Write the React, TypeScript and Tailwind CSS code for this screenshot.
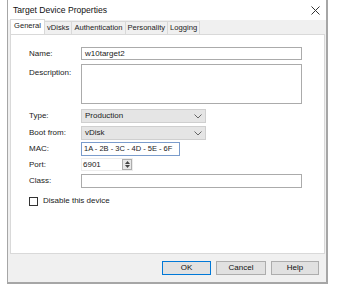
const font = { fontFamily: '"Liberation Sans", Arial, sans-serif' };

function Chevron() {
  return (
    <svg width="8" height="5" viewBox="0 0 8 5" className="text-[#666]">
      <path d="M0.5 0.5l3.5 3.5L7.5 0.5" fill="none" stroke="currentColor" strokeWidth="1" />
    </svg>
  );
}

function Label({ children }: { children: React.ReactNode }) {
  return <div className="w-[52px] shrink-0 text-[8px] text-[#222]">{children}</div>;
}

export default function App() {
  const tabs = ['General', 'vDisks', 'Authentication', 'Personality', 'Logging'];

  return (
    <div className="w-[340px] h-[300px] bg-white" style={font}>
      <div className="ml-[7px] w-[321px] h-[284px] border-l border-r-2 border-b-2 border-[#a6a6a6] flex flex-col bg-white">
        {/* title bar */}
        <div className="h-[20px] flex items-center justify-between pl-[5px] pr-[6px]">
          <span className="text-[8.6px] text-[#111]">Target Device Properties</span>
          <svg width="9" height="9" viewBox="0 0 9 9">
            <path d="M0.5 0.5l8 8M8.5 0.5l-8 8" stroke="#333" strokeWidth="1" />
          </svg>
        </div>

        {/* tabs */}
        <div className="bg-[#f0f0f0] pl-[2px] pr-[1px] flex flex-col flex-1">
          <div className="flex items-end h-[14px] pl-[1px]">
            {tabs.map((t, i) => (
              <div
                key={t}
                className={`text-[7.6px] border border-b-0 border-[#d9d9d9] leading-[12px] -ml-px text-[#222] ${
                  i === 0 ? 'bg-white h-[15px] relative z-10 px-[3px]' : 'bg-[#f0f0f0] h-[13px] px-[2px]'
                }`}
              >
                {t}
              </div>
            ))}
          </div>

          {/* panel */}
          <div className="h-[220px] bg-white border border-[#d9d9d9] pl-[18px] pt-[12px] flex flex-col text-[8px] text-[#222]">
            <div className="flex items-center h-[13px]">
              <Label>Name:</Label>
              <div className="w-[221px] h-[13px] border border-[#ababab] px-[3px] leading-[11px]">w10target2</div>
            </div>

            <div className="flex mt-[4px]">
              <div className="pt-[3px]">
                <Label>Description:</Label>
              </div>
              <div className="w-[221px] h-[40px] border border-[#ababab]" />
            </div>

            <div className="flex items-center mt-[5px]">
              <Label>Type:</Label>
              <div className="w-[125px] h-[14px] bg-[#e5e5e5] border border-[#cfcfcf] px-[3px] flex items-center justify-between">
                <span>Production</span>
                <Chevron />
              </div>
            </div>

            <div className="flex items-center mt-[3px]">
              <Label>Boot from:</Label>
              <div className="w-[125px] h-[14px] bg-[#e5e5e5] border border-[#cfcfcf] px-[3px] flex items-center justify-between">
                <span>vDisk</span>
                <Chevron />
              </div>
            </div>

            <div className="flex items-center mt-[2px]">
              <Label>MAC:</Label>
              <div className="w-[99px] h-[14px] border border-[#7a9ccc] px-[2px] flex items-center whitespace-nowrap text-[7.5px]">
                1A - 2B - 3C - 4D - 5E - 6F
              </div>
            </div>

            <div className="flex items-center mt-[2px]">
              <Label>Port:</Label>
              <div className="w-[52px] h-[13px] flex items-center border border-[#ececec]">
                <span className="flex-1 pl-[1px]">6901</span>
                <div className="w-[10px] h-[11px] border border-[#adadad] bg-[#e8e8e8] flex flex-col items-center justify-around">
                  <svg width="5" height="3" viewBox="0 0 5 3">
                    <path d="M0 3L2.5 0L5 3Z" fill="#444" />
                  </svg>
                  <svg width="5" height="3" viewBox="0 0 5 3">
                    <path d="M0 0L2.5 3L5 0Z" fill="#444" />
                  </svg>
                </div>
              </div>
            </div>

            <div className="flex items-center mt-[3px]">
              <Label>Class:</Label>
              <div className="w-[221px] h-[14px] border border-[#ababab]" />
            </div>

            <div className="flex items-center mt-[7px] gap-[5px]">
              <div className="w-[9px] h-[9px] border border-[#333] bg-white" />
              <span>Disable this device</span>
            </div>
          </div>

          {/* footer */}
          <div className="flex-1 flex items-center justify-end gap-[5px] pr-[6px]">
            <button className="w-[49px] h-[14px] border border-[#0078d7] bg-[#e1e1e1] text-[8px] leading-[12px] text-[#111]">OK</button>
            <button className="w-[50px] h-[14px] border border-[#adadad] bg-[#e1e1e1] text-[8px] leading-[12px] text-[#111]">Cancel</button>
            <button className="w-[48px] h-[14px] border border-[#adadad] bg-[#e1e1e1] text-[8px] leading-[12px] text-[#111]">Help</button>
          </div>
        </div>
      </div>
    </div>
  );
}
